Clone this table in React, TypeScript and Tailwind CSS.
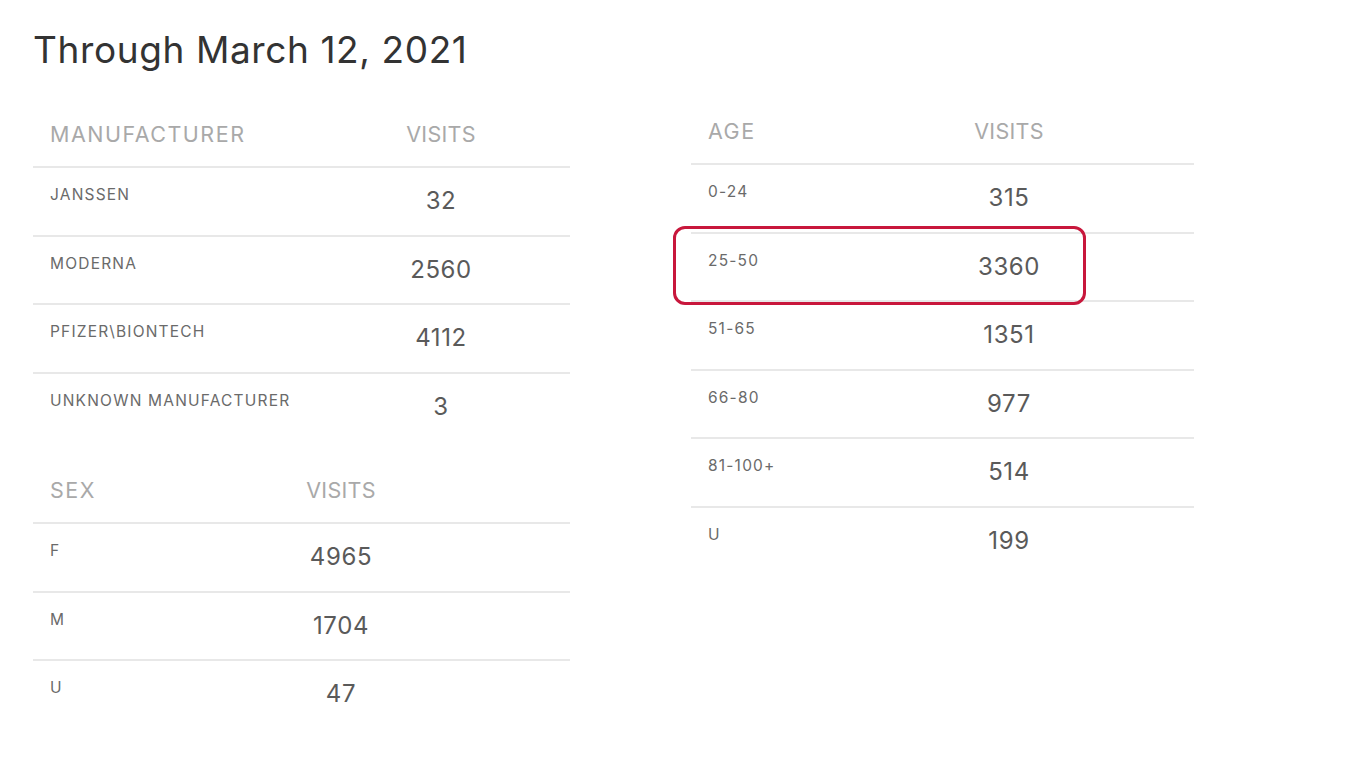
import React from "react";

const font = { fontFamily: "Inter, 'Open Sans', sans-serif" };

type Row = { label: string; value: string };

function Table({
  head,
  rows,
  labelW,
  valueW,
  highlight,
}: {
  head: [string, string];
  rows: Row[];
  labelW: string;
  valueW: string;
  highlight?: number;
}) {
  return (
    <div className="flex flex-col">
      <div className="flex h-[66px] items-center border-b-2 border-[#e8e8e8]">
        <div className={`${labelW} pl-[17px] text-[21.5px] text-[#a9a9a9] tracking-[1.5px]`}>{head[0]}</div>
        <div className={`${valueW} text-center text-[21.5px] text-[#a9a9a9] tracking-[0.3px]`}>{head[1]}</div>
      </div>
      {rows.map((r, i) => (
        <div
          key={r.label}
          className={`relative flex h-[68.5px] items-start pt-[17px] ${i < rows.length - 1 ? "border-b-2 border-[#e8e8e8]" : ""}`}
        >
          <div className={`${labelW} pl-[17px] text-[15.5px] leading-[20px] tracking-[1.2px] text-[#6a6a6a]`}>{r.label}</div>
          <div className={`${valueW} text-center text-[24px] leading-[32px] tracking-[0.6px] text-[#5a5a5a]`}>{r.value}</div>
          {highlight === i && (
            <div className="pointer-events-none absolute left-[-18px] top-[-8px] h-[79px] w-[413px] rounded-[12px] border-[3.5px] border-[#c8173c]" />
          )}
        </div>
      ))}
    </div>
  );
}

export default function App() {
  return (
    <div className="min-h-[768px] w-[1366px] bg-white pl-[33px] pt-[27px]" style={font}>
      <h1 className="text-[37px] leading-[46px] tracking-[0.6px] text-[#333] font-normal">Through March 12, 2021</h1>
      <div className="mt-[26px] flex items-start gap-[121px]">
        <div className="mt-[3px] flex w-[537px] flex-col gap-[16px]">
          <Table
            head={["MANUFACTURER", "VISITS"]}
            labelW="w-[279px]"
            valueW="w-[258px]"
            rows={[
              { label: "JANSSEN", value: "32" },
              { label: "MODERNA", value: "2560" },
              { label: "PFIZER\\BIONTECH", value: "4112" },
              { label: "UNKNOWN MANUFACTURER", value: "3" },
            ]}
          />
          <Table
            head={["SEX", "VISITS"]}
            labelW="w-[79px]"
            valueW="w-[458px]"
            rows={[
              { label: "F", value: "4965" },
              { label: "M", value: "1704" },
              { label: "U", value: "47" },
            ]}
          />
        </div>
        <div className="w-[503px]">
          <Table
            head={["AGE", "VISITS"]}
            labelW="w-[133px]"
            valueW="w-[370px]"
            highlight={1}
            rows={[
              { label: "0-24", value: "315" },
              { label: "25-50", value: "3360" },
              { label: "51-65", value: "1351" },
              { label: "66-80", value: "977" },
              { label: "81-100+", value: "514" },
              { label: "U", value: "199" },
            ]}
          />
        </div>
      </div>
    </div>
  );
}
